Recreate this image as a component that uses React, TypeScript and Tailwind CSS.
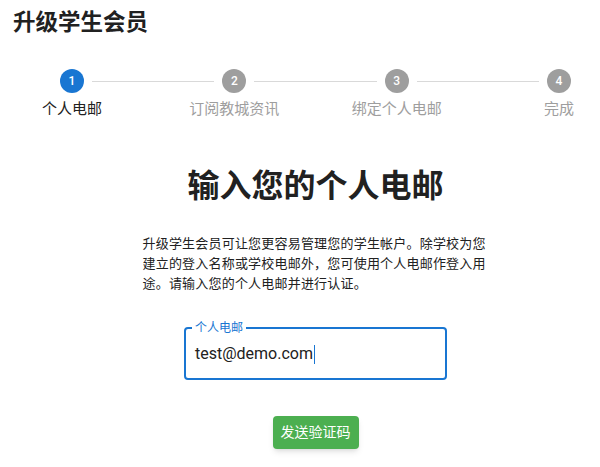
const steps = ["个人电邮", "订阅教城资讯", "绑定个人电邮", "完成"];

const font = "font-['Roboto','Noto_Sans_CJK_SC',sans-serif]";

function Stepper() {
  return (
    <div className="flex items-start px-[29px] mt-[31px] w-full">
      {steps.map((label, i) => (
        <div key={label} className={i < steps.length - 1 ? "flex flex-1 items-start" : "flex items-start"}>
          <div className="flex flex-col items-center w-6">
            <div
              className={
                "w-6 h-6 rounded-full flex items-center justify-center text-[12px] text-white font-medium " +
                (i === 0 ? "bg-[#1976d2]" : "bg-[#9e9e9e]")
              }
            >
              {i + 1}
            </div>
            <div
              className={
                "mt-[6px] whitespace-nowrap text-[15px] leading-[20px] " +
                (i === 0 ? "text-[#212121]" : "text-[#9e9e9e]")
              }
            >
              {label}
            </div>
          </div>
          {i < steps.length - 1 && <div className="flex-1 h-px bg-[#d9d9d9] mx-2 mt-[12px]" />}
        </div>
      ))}
    </div>
  );
}

export default function App() {
  return (
    <div className={`w-full h-[467px] bg-white px-[13px] overflow-hidden ${font}`}>
      <h1 className="pt-[6px] text-[22.5px] leading-[32px] font-bold text-[#212121]">升级学生会员</h1>

      <div className="ml-[18px] -mr-[13px] flex flex-col items-center">
        <Stepper />

        <h2 className="mt-[47px] text-[32px] leading-[40px] font-bold text-[#212121]">输入您的个人电邮</h2>

        <p className="mt-[28px] w-[346px] text-[13px] leading-[20px] tracking-[0.2px] text-[#212121]">
          升级学生会员可让您更容易管理您的学生帐户。除学校为您建立的登入名称或学校电邮外，您可使用个人电邮作登入用途。请输入您的个人电邮并进行认证。
        </p>

        <fieldset className="mt-[28px] w-[263px] h-[58px] border-2 border-[#1976d2] rounded-[4px] px-[9px]">
          <legend className="-ml-[3px] px-[3px] text-[12px] leading-[12px] text-[#1976d2]">个人电邮</legend>
          <div className="flex items-center h-[40px] text-[16px] text-[#212121]">
            <span>test@demo.com</span>
            <span className="ml-px w-px h-[19px] bg-[#1976d2]" />
          </div>
        </fieldset>

        <button className="mt-[36px] h-[33px] px-2 rounded-[4px] bg-[#4caf50] text-white text-[14px] shadow-md">
          发送验证码
        </button>
      </div>
    </div>
  );
}
